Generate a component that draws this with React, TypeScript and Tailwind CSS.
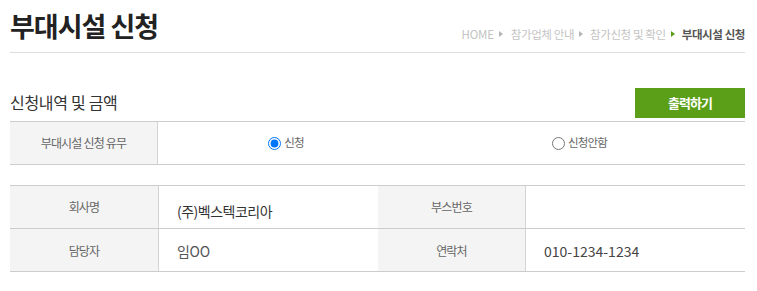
import React from "react";

const Arrow = ({ color }: { color: string }) => (
  <svg width="4" height="6" viewBox="0 0 4 6" className="mx-[5px] shrink-0">
    <path d="M0 0 L4 3 L0 6 Z" fill={color} />
  </svg>
);

export default function App() {
  return (
    <div className="w-[757px] h-[291px] bg-white pl-[10px] pr-[12px] font-['Noto_Sans_CJK_KR',sans-serif]">
      {/* header */}
      <div className="h-[53px] border-b border-[#dddddd] flex justify-between items-start">
        <h1 className="pt-[10px] text-[27px] leading-[32px] font-semibold tracking-[-1px] text-[#222]">
          부대시설 신청
        </h1>
        <div className="pt-[26px] flex items-center text-[11.5px] leading-[16px] tracking-[-0.4px]">
          <span className="text-[#c4c4c4] tracking-[-0.2px]">HOME</span>
          <Arrow color="#b5b5b5" />
          <span className="text-[#c4c4c4] ml-[3px]">참가업체 안내</span>
          <Arrow color="#b5b5b5" />
          <span className="text-[#c4c4c4] ml-[2px]">참가신청 및 확인</span>
          <Arrow color="#5a9f17" />
          <span className="text-[#555] font-bold ml-[2px]">부대시설 신청</span>
        </div>
      </div>

      {/* section row */}
      <div className="mt-[35px] h-[30px] flex justify-between items-center">
        <h2 className="text-[16px] leading-[20px] text-[#333] tracking-[-0.3px] -mt-[3px]">
          신청내역 및 금액
        </h2>
        <button className="w-[110px] h-[30px] bg-[#5a9f17] text-white text-[13px] font-bold tracking-[-1px]">
          출력하기
        </button>
      </div>

      {/* table 1 */}
      <div className="mt-[3px] border-t border-b border-[#cccccc] flex h-[44px]">
        <div className="w-[148px] bg-[#f4f4f4] border-r border-[#d3d3d3] flex items-center justify-center text-[12px] text-[#666] tracking-[-0.8px]">
          부대시설 신청 유무
        </div>
        <div className="w-[256px] flex items-center justify-center">
          <label className="flex items-center gap-[3px] text-[11.5px] text-[#666] tracking-[-0.8px]">
            <input type="radio" name="apply" defaultChecked className="m-0 w-[13px] h-[13px]" />
            신청
          </label>
        </div>
        <div className="flex-1 flex items-center justify-center">
          <label className="flex items-center gap-[3px] text-[11.5px] text-[#666] tracking-[-0.8px]">
            <input type="radio" name="apply" className="m-0 w-[13px] h-[13px]" />
            신청안함
          </label>
        </div>
      </div>

      {/* table 2 */}
      <div className="mt-[20px] border-t border-[#cccccc]">
        <div className="flex h-[43px] border-b border-[#cccccc]">
          <div className="w-[149px] bg-[#f4f4f4] border-r border-[#d3d3d3] flex items-center justify-center text-[12px] text-[#666] tracking-[-0.8px]">
            회사명
          </div>
          <div className="w-[219px] flex items-center pl-[18px] pt-[8px] text-[14px] text-[#333] tracking-[-0.5px]">
            (주)벡스텍코리아
          </div>
          <div className="w-[148px] bg-[#f4f4f4] border-r border-[#d3d3d3] flex items-center justify-center text-[12px] text-[#666] tracking-[-0.8px]">
            부스번호
          </div>
          <div className="flex-1" />
        </div>
        <div className="flex h-[43px] border-b border-[#cccccc]">
          <div className="w-[149px] bg-[#f4f4f4] border-r border-[#d3d3d3] flex items-center justify-center pt-[2px] text-[12px] text-[#666] tracking-[-0.8px]">
            담당자
          </div>
          <div className="w-[219px] flex items-center pl-[18px] pt-[2px] text-[14px] text-[#555] tracking-[-0.3px]">
            임OO
          </div>
          <div className="w-[148px] bg-[#f4f4f4] border-r border-[#d3d3d3] flex items-center justify-center pt-[2px] text-[12px] text-[#666] tracking-[-0.8px]">
            연락처
          </div>
          <div className="flex-1 flex items-center pl-[18px] pt-[2px] text-[14px] text-[#444]">
            010-1234-1234
          </div>
        </div>
      </div>
    </div>
  );
}
